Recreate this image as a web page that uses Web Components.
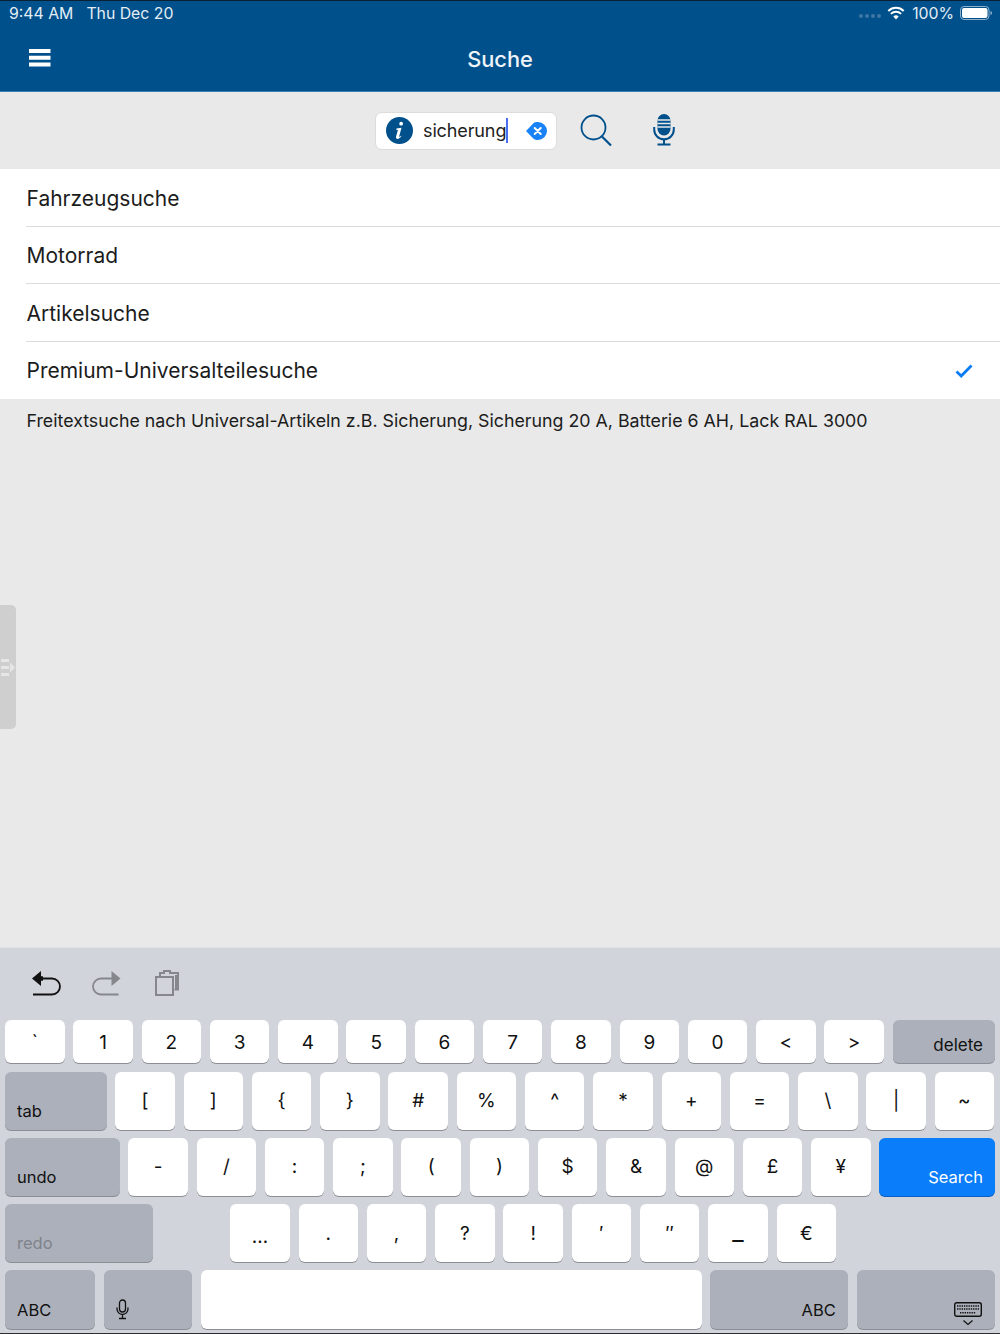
<!DOCTYPE html>
<html>
<head>
<meta charset="utf-8">
<style>
html,body{margin:0;padding:0;}
body{width:1000px;height:1334px;overflow:hidden;font-family:Inter,"Liberation Sans",sans-serif;background:#e9e9e9;}
app-screen{height:1334px;}
</style>
</head>
<body>
<app-screen>
    <app-header slot="top"></app-header>
    <search-bar slot="top"></search-bar>
    <search-list slot="top">
        <search-row style="height:58px">Fahrzeugsuche</search-row>
        <search-row style="height:57px">Motorrad</search-row>
        <search-row style="height:58px">Artikelsuche</search-row>
        <search-row style="height:57px" checked last>Premium-Universalteilesuche</search-row>
    </search-list>
    <p slot="top" style="margin:0;padding:11px 0 0 26.5px;font-size:17.8px;line-height:22px;color:#1c1c1c;">Freitextsuche nach Universal-Artikeln z.B. Sicherung, Sicherung 20 A, Batterie 6 AH, Lack RAL 3000</p>
    <side-handle slot="handle"></side-handle>
    <ios-keyboard slot="bottom"></ios-keyboard>
</app-screen>

<script>
class AppScreen extends HTMLElement{
    constructor(){
        super();
        this.attachShadow({mode:'open'});
        this.shadowRoot.innerHTML = `
            <style>
                :host{display:flex;flex-direction:column;position:relative;width:1000px;}
                .top{flex:1;min-height:0;}
            </style>
            <div class="top"><slot name="top"></slot></div>
            <slot name="handle"></slot>
            <slot name="bottom"></slot>
        `;
    }
}
customElements.define('app-screen', AppScreen);

class AppHeader extends HTMLElement{
    constructor(){
        super();
        this.attachShadow({mode:'open'});
        this.shadowRoot.innerHTML = `
            <style>
                :host{display:block;background:#00508c;border-top:1px solid #0b2033;border-bottom:1px solid #3f7fae;height:90px;color:#fff;}
                .status{display:flex;align-items:center;height:24px;margin-bottom:1px;padding:0 7px 0 9px;font-size:15.800px;color:#e4edf4;}
                .time{margin-right:13px;}
                .right{margin-left:auto;display:flex;align-items:center;}
                .dots{display:flex;gap:2px;margin-right:6px;margin-top:5px;}
                .dots i{width:4px;height:4px;border-radius:50%;background:#3f76a3;}
                .pct{margin:0 6px 0 7px;}
                .bar{display:grid;grid-template-columns:60px 1fr 60px;align-items:center;height:65px;padding-left:9px;}
                .bar svg{display:block;}
                h1{margin:0;font-size:21.800px;font-weight:500;text-align:center;color:#eef4f8;padding-right:9px;padding-top:1px;}
            </style>
            <div class="status">
                <span class="time">9:44 AM</span><span>Thu Dec 20</span>
                <div class="right">
                    <span class="dots"><i></i><i></i><i></i><i></i></span>
                    <svg width="18" height="14" viewBox="0 0 18 14"><path d="M9 13.500 6.300 10.400a4 4 0 0 1 5.400 0z" fill="#fff"/><path d="M3.900 7.900a7.400 7.400 0 0 1 10.200 0M1.300 5a11 11 0 0 1 15.400 0" fill="none" stroke="#fff" stroke-width="2"/></svg>
                    <span class="pct">100%</span>
                    <svg width="33" height="14" viewBox="0 0 33 14"><rect x=".5" y=".5" width="28.500" height="13" rx="3.500" fill="none" stroke="#8fb1cc"/><rect x="2" y="2" width="25.500" height="10" rx="2" fill="#fff"/><path d="M30.500 5v4c1-.3 1.500-1 1.500-2s-.5-1.700-1.500-2z" fill="#8fb1cc"/></svg>
                </div>
            </div>
            <div class="bar">
                <svg width="22" height="18" viewBox="0 0 22 18" style="margin-top:-2px;margin-left:20px"><path d="M0 0h21.500v4H0zM0 6.800h21.500v4H0zM0 13.500h21.500v4H0z" fill="#fff"/></svg>
                <h1>Suche</h1>
            </div>
        `;
    }
}
customElements.define('app-header', AppHeader);

class SearchBar extends HTMLElement{
    constructor(){
        super();
        this.attachShadow({mode:'open'});
        this.shadowRoot.innerHTML = `
            <style>
                :host{display:flex;align-items:center;height:77px;background:#e9e9e9;padding-left:375px;box-sizing:border-box;}
                .field{display:flex;align-items:center;box-sizing:border-box;width:182px;height:38px;background:#fff;border:1px solid #dcdcdc;border-radius:7px;padding:0 9px 0 10px;}
                .text{margin-left:10px;font-size:18px;letter-spacing:-.12px;color:#222;border-right:2px solid #4a6cf0;line-height:25px;}
                .clear{margin-left:auto;display:block;}
                .glass{margin-left:23px;display:block;margin-top:-1px;}
                .mic{margin-left:41px;display:block;margin-top:-1px;}
            </style>
            <div class="field">
                <svg width="27" height="27" viewBox="0 0 27 27"><circle cx="13.500" cy="13.500" r="13.500" fill="#00508c"/><path d="M15.200 4.800a1.900 1.900 0 1 1-.1 3.800 1.900 1.900 0 0 1 .1-3.800zM10.500 11.600l5-.8-2.300 8.500c-.2.800.5.800 1.800-.6l.5.400c-1.500 2-3 3-4.300 2.800-1.200-.2-1.400-1.100-1.100-2.300l1.800-6.500-1.500-.2z" fill="#fff"/></svg>
                <span class="text">sicherung</span>
                <svg class="clear" width="22" height="18" viewBox="0 0 22 18"><path d="M1 9 7.500 2.200A5 5 0 0 1 11.500 0H13a9 9 0 0 1 0 18h-1.500a5 5 0 0 1-4-2.200z" fill="#1a82f7"/><path d="M9.700 6 15.700 12M15.700 6 9.700 12" stroke="#fff" stroke-width="2" stroke-linecap="round"/></svg>
            </div>
            <svg class="glass" width="32" height="33" viewBox="0 0 32 33"><circle cx="13.500" cy="13.500" r="12" fill="none" stroke="#00508c" stroke-width="1.800"/><path d="M22 22.500 31 31.500" stroke="#00508c" stroke-width="2.200"/></svg>
            <svg class="mic" width="22" height="32" viewBox="0 0 22 32"><rect x="4.500" y="0" width="13" height="21.500" rx="6.500" fill="#00508c"/><path d="M4.500 6h13M4.500 9.500h13M4.500 13h13" stroke="#e9e9e9" stroke-width="1.300"/><path d="M1.200 13v2.500a9.800 9.800 0 0 0 19.600 0V13M11 25.500V30M4.500 30.500h13" fill="none" stroke="#00508c" stroke-width="2"/></svg>
        `;
    }
}
customElements.define('search-bar', SearchBar);

class SearchList extends HTMLElement{
    constructor(){
        super();
        this.attachShadow({mode:'open'});
        this.shadowRoot.innerHTML = `
            <style>:host{display:block;background:#fff;}</style>
            <slot></slot>
        `;
    }
}
customElements.define('search-list', SearchList);

class SearchRow extends HTMLElement{
    constructor(){
        super();
        this.attachShadow({mode:'open'});
        const check = this.hasAttribute('checked') ? `<svg width="18" height="14" viewBox="0 0 18 14"><path d="M1.500 7.500 6.200 12 16.500 1.500" fill="none" stroke="#0a7df5" stroke-width="2.800"/></svg>` : '';
        this.shadowRoot.innerHTML = `
            <style>
                :host{display:block;box-sizing:border-box;padding-left:26px;font-size:21px;color:#1c1c1c;}
                .inner{display:flex;align-items:center;justify-content:space-between;box-sizing:border-box;height:100%;padding:1px 27px 0 .5px;border-bottom:1px solid #dcdcdc;}
                :host([last]) .inner{border-bottom:0;padding-top:0;}
                svg{margin-top:1px;}
            </style>
            <div class="inner">
                <span><slot></slot></span>
                ${check}
            </div>
        `;
    }
}
customElements.define('search-row', SearchRow);

class SideHandle extends HTMLElement{
    constructor(){
        super();
        this.attachShadow({mode:'open'});
        this.shadowRoot.innerHTML = `
            <style>
                :host{position:absolute;left:0;top:605px;width:16px;height:124px;background:#cfcfcf;border-radius:0 5px 5px 0;display:flex;align-items:center;}
                svg{margin-top:1px;display:block;}
            </style>
            <svg width="16" height="20" viewBox="0 0 16 20"><path d="M1 1h8v3H1zM1 8h8v3H1zM1 15h8v3H1z" fill="#e6e6e6"/><path d="M10 4.500l5 5-5 5z" fill="#e6e6e6"/></svg>
        `;
    }
}
customElements.define('side-handle', SideHandle);

class KbKey extends HTMLElement{
    constructor(){
        super();
        this.attachShadow({mode:'open'});
        this.shadowRoot.innerHTML = `
            <style>
                :host{display:flex;flex:none;box-sizing:border-box;width:59.500px;height:58.300px;background:#fff;border-radius:6px;box-shadow:0 1px 0 #8b8e94;color:#111;font-size:19px;align-items:center;justify-content:center;}
                :host([fn]){background:#acb0ba;align-items:flex-end;justify-content:flex-start;padding:0 0 9px 12px;font-size:16.500px;}
                :host([end]){justify-content:flex-end;padding:0 12px 9px 0;}
                :host([off]){color:#7f838c;}
                :host([go]){background:#0a7dfb;color:#fff;box-shadow:0 1px 0 #0a5fc0;}
            </style>
            <slot></slot>
        `;
    }
}
customElements.define('kb-key', KbKey);

class IosKeyboard extends HTMLElement{
    constructor(){
        super();
        this.attachShadow({mode:'open'});
        const keys = s => s.split(' ').map(k => `<kb-key>${k}</kb-key>`).join('');
        this.shadowRoot.innerHTML = `
            <style>
                :host{display:block;height:387px;box-sizing:border-box;background:#d1d4da;border-top:1px solid #dfe1e4;border-bottom:1px solid #2b2d30;padding:0 5px;}
                .tools{display:flex;align-items:center;box-sizing:border-box;height:72px;padding:0 0 2px 27px;gap:31px;}
                .tools svg{display:block;}
                .tools .copy{margin-left:3px;}
                .row{display:flex;gap:8.790px;margin-bottom:8px;}
                .first{margin-bottom:8.500px;}
                .first kb-key{height:43px;padding-top:1px;}
                .gap{width:60.200px;flex:none;margin-right:-0.500px;}
            </style>
            <div class="tools">
                <svg width="29" height="27" viewBox="0 0 29 27"><path d="M0 8.500 9 1v5.300h2v4.500H9V16z" fill="#111"/><path d="M8 8.500h12a7.500 7.500 0 0 1 0 16H1" fill="none" stroke="#111" stroke-width="1.800"/></svg>
                <svg width="29" height="27" viewBox="0 0 29 27"><path d="M28.500 8.500 19.500 1v15z" fill="#85878c"/><path d="M21 8.500H9a7.500 7.500 0 0 0 0 16h17.500" fill="none" stroke="#85878c" stroke-width="1.800"/></svg>
                <svg class="copy" width="25" height="26" viewBox="0 0 25 26"><rect x="1" y="7" width="17" height="18" fill="none" stroke="#85878c" stroke-width="2"/><path d="M5 6V3h4V1h6v2h8v16.500h-3.500" fill="none" stroke="#85878c" stroke-width="2"/><path d="M20 5h4v15h-4z" fill="#85878c"/></svg>
            </div>
            <div class="row first">
                ${keys('` 1 2 3 4 5 6 7 8 9 0 < >')}
                <kb-key fn end style="flex:1;padding-top:0;padding-bottom:8px;font-size:17px">delete</kb-key>
            </div>
            <div class="row">
                <kb-key fn style="width:101.500px">tab</kb-key>
                ${keys('[ ] { } # % ^ * + = \\ | ~')}
            </div>
            <div class="row">
                <kb-key fn style="width:114.500px">undo</kb-key>
                ${keys('- / : ; ( ) $ & @ £ ¥').replace('&','&amp;')}
                <kb-key fn go end style="flex:1">Search</kb-key>
            </div>
            <div class="row">
                <kb-key fn off style="width:148px">redo</kb-key>
                <span class="gap"></span>
                <kb-key style="padding:6px 0 0">…</kb-key>
                ${keys('. , ? ! ′ ″')}
                <kb-key style="font-size:25px;padding-bottom:5px">_</kb-key>
                <kb-key>€</kb-key>
            </div>
            <div class="row">
                <kb-key fn style="width:90px">ABC</kb-key>
                <kb-key fn style="width:88px"><svg width="13" height="21" viewBox="0 0 13 21"><rect x="3.500" y="1" width="6" height="12" rx="3" fill="none" stroke="#111" stroke-width="1.300"/><path d="M1 8.500v1.500a5.500 5.500 0 0 0 11 0V8.500M6.500 15.500V19M3 19.500h7" fill="none" stroke="#111" stroke-width="1.300"/></svg></kb-key>
                <kb-key style="width:501px"></kb-key>
                <kb-key fn end style="width:137.500px">ABC</kb-key>
                <kb-key fn end style="flex:1;padding:0 13px 3px 0"><svg width="28" height="24" viewBox="0 0 28 24"><rect x=".7" y=".7" width="26.600" height="13.600" rx="2" fill="none" stroke="#111" stroke-width="1.400"/><path d="M3 4h22M3 7h22M6 10.800h16" stroke="#111" stroke-width="1.500" stroke-dasharray="1.400 .9"/><path d="M9.500 18.500 14 22.500 18.500 18.500" fill="none" stroke="#111" stroke-width="1.200"/></svg></kb-key>
            </div>
        `;
    }
}
customElements.define('ios-keyboard', IosKeyboard);
</script>
</body>
</html>
